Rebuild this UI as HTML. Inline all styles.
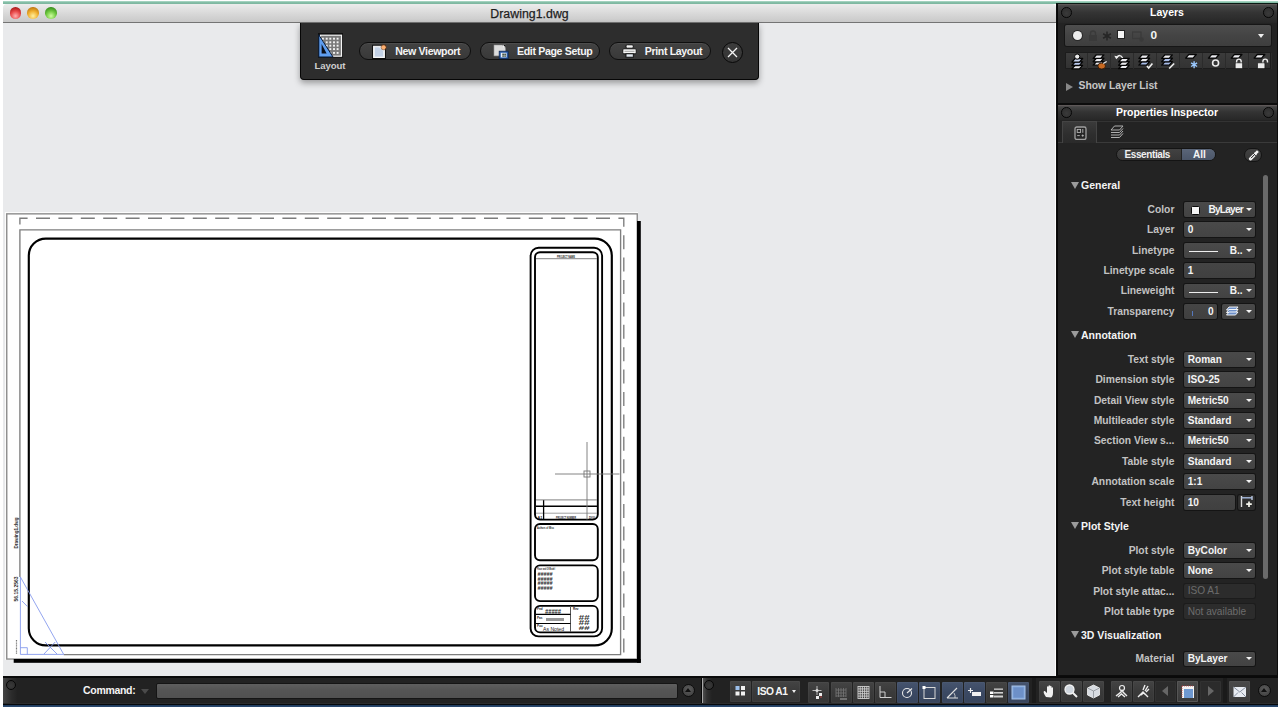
<!DOCTYPE html>
<html><head><meta charset="utf-8">
<style>
*{margin:0;padding:0;box-sizing:border-box}
html,body{width:1280px;height:707px;overflow:hidden;background:#fff;font-family:"Liberation Sans",sans-serif}
.a{position:absolute}
#teal{left:3px;top:1.3px;width:1275px;height:2.7px;background:linear-gradient(#b8e0d0,#86bfa8 40%,#7cb59e)}
#title{left:3px;top:4px;width:1053px;height:19px;background:linear-gradient(#ececec,#d6d6d6 60%,#c9c9c9);border-bottom:1px solid #747474;border-top-left-radius:4px;border-top-right-radius:4px}
#title .t{left:0;width:1053px;top:3px;text-align:center;font-size:12.3px;color:#1e1e1e;-webkit-text-stroke:0.25px #1e1e1e;letter-spacing:0.05px}
.tl{width:11.5px;height:11.5px;border-radius:50%;top:3.3px}
#canvas{left:3px;top:23px;width:1053px;height:653px;background:#e9eaec;border-right:1px solid #fbfbfb}
#panel{left:1056px;top:3px;width:222px;height:673px;background:#232323;border:1px solid #0c0c0c;border-top:1px solid #0b1a14}
#status{left:3px;top:676px;width:1275px;height:28px;background:#222;border-top:2px solid #0a0a0a}
#bband{left:3px;top:703px;width:1275px;height:4px;background:linear-gradient(#2c2c2c 0,#2c2c2c 1px,#05080b 1px,#05080b 2px,#1d3858 2px,#2d4d74 4px)}

#pop{left:299.5px;top:23px;width:459px;height:56.7px;background:#2d2d2d;border:1.5px solid #060606;border-top:none;border-radius:0 0 4px 4px;box-shadow:0 3px 6px rgba(0,0,0,.35)}
.pill{position:absolute;top:18.8px;height:18.6px;border-radius:9.5px;background:linear-gradient(#424242,#393939);border:1.3px solid #0e0e0e;box-shadow:inset 0 1px 0 rgba(255,255,255,.06)}
.pill span{position:absolute;top:2px;font-size:10.6px;font-weight:bold;color:#f4f4f4;white-space:nowrap;letter-spacing:-0.35px}
.lbl{font-weight:bold;white-space:nowrap}

.hdr{position:absolute;left:1px;width:220px;height:16px;background:linear-gradient(#5e5858 0,#5e5858 1px,#464646 1.6px,#343434 45%,#272727);}
.hdr .c{position:absolute;top:3px;width:10.5px;height:10.5px;border-radius:50%;background:radial-gradient(circle at 50% 60%,#3a3a3a,#2a2a2a);border:1.8px solid #070707}
.hdr .tt{position:absolute;left:0;width:220px;text-align:center;top:2px;font-size:10.5px;font-weight:bold;color:#fff}
.pl{position:absolute;right:102.6px;font-size:10.3px;font-weight:bold;color:#c2c2c2;white-space:nowrap;text-align:right}
.dd{position:absolute;left:126.5px;width:71px;height:14.8px;border-radius:2px;background:linear-gradient(#4a4a4a,#434343);box-shadow:0 0 0 1px #141414}
.dd span{position:absolute;left:4.2px;top:1.8px;font-size:10.1px;font-weight:bold;color:#f4f4f4;white-space:nowrap}
.ar{position:absolute;right:3px;top:5.8px;width:0;height:0;border-left:3px solid transparent;border-right:3px solid transparent;border-top:3.5px solid #f4f4f4}
.tx{background:linear-gradient(#454545,#404040)}
.dis{background:#2c2c2c;box-shadow:0 0 0 1px #1c1c1c}
.dis span{color:#6c6c6c;font-weight:normal}
.sec{position:absolute;left:24px;font-size:10.5px;font-weight:bold;color:#f4f4f4}
.tri{position:absolute;left:14px;width:0;height:0;border-left:4px solid transparent;border-right:4px solid transparent;border-top:7px solid #9a9a9a}

.sb{position:absolute;top:5px;width:21px;height:21px;background:linear-gradient(#444,#3a3a3a 50%,#363636);border-radius:1px;box-shadow:inset 0 0 0 1px rgba(255,255,255,.03)}
.sb.bl{background:linear-gradient(#46546e,#3b4963 50%,#37445c)}
.sb svg{position:absolute;left:0;top:0}
</style></head><body>
<div class="a" id="teal"></div>
<div class="a" id="title"><div class="a t">Drawing1.dwg</div>
<div class="a tl" style="left:6.8px;background:radial-gradient(circle at 50% 75%,#ffb0b0,#e84a4a 45%,#b01c1c 80%,#6a0c0c)"></div>
<div class="a tl" style="left:24.3px;background:radial-gradient(circle at 50% 75%,#fff0a0,#f0b030 45%,#c07a10 80%,#7a4a05)"></div>
<div class="a tl" style="left:42.2px;background:radial-gradient(circle at 50% 75%,#d0ffa0,#70c840 45%,#3a9020 80%,#1e5a0a)"></div>
</div>
<div class="a" id="canvas"></div>
<svg class="a" style="left:0;top:0" width="1280" height="707" viewBox="0 0 1280 707">
<rect x="5" y="212" width="633" height="448" fill="#fcfcfc"/><rect x="6.75" y="213.85" width="630.5" height="445.2" fill="#fff" stroke="#8c8c8c" stroke-width="1.4"/>
<rect x="637" y="221" width="3.8" height="441.8" fill="#000"/>
<rect x="13.7" y="659" width="627.1" height="3.8" fill="#000"/>
<path d="M19.9,224.5 L19.9,218.2 L623.8,218.2 L623.8,654.6" fill="none" stroke="#7c7c7c" stroke-width="1.35" stroke-dasharray="14 8.4"/>
<path d="M19.9,577 L19.9,229.9 L620.6,229.9 L620.6,654.6 L63.7,654.6" fill="none" stroke="#7e7e7e" stroke-width="1.35"/>
<rect x="28.8" y="238.6" width="583" height="406.8" rx="17" fill="none" stroke="#000" stroke-width="2.15"/>
<rect x="530.6" y="247.8" width="71.5" height="388.6" rx="8" fill="none" stroke="#000" stroke-width="1.9"/>
<rect x="535" y="252.3" width="62.8" height="267.3" rx="5" fill="none" stroke="#000" stroke-width="1.9"/>
<rect x="535" y="524" width="62.8" height="36.2" rx="5" fill="none" stroke="#000" stroke-width="1.9"/>
<rect x="535" y="565.4" width="62.8" height="35.7" rx="5" fill="none" stroke="#000" stroke-width="1.9"/>
<rect x="535" y="605.9" width="62.8" height="26.5" rx="5" fill="none" stroke="#000" stroke-width="1.9"/>
<line x1="536" y1="258.7" x2="597" y2="258.7" stroke="#9a9a9a" stroke-width="1.3"/>
<line x1="536" y1="499.9" x2="597" y2="499.9" stroke="#9a9a9a" stroke-width="1.4"/>
<line x1="536" y1="506.3" x2="597" y2="506.3" stroke="#000" stroke-width="1.4"/>
<line x1="536" y1="513.2" x2="597" y2="513.2" stroke="#a0a0a0" stroke-width="1"/>
<line x1="543.6" y1="500.2" x2="543.6" y2="519.6" stroke="#000" stroke-width="1.3"/>
<line x1="587" y1="442" x2="587" y2="519.6" stroke="#777" stroke-width="0.9"/>
<line x1="555" y1="474" x2="619.5" y2="474" stroke="#777" stroke-width="0.9"/>
<rect x="584" y="471" width="6" height="6" fill="none" stroke="#777" stroke-width="0.9"/>
<line x1="570.5" y1="606" x2="570.5" y2="632" stroke="#555" stroke-width="1"/>
<line x1="536" y1="614.4" x2="570.5" y2="614.4" stroke="#000" stroke-width="1.2"/>
<line x1="536" y1="623.5" x2="570.5" y2="623.5" stroke="#000" stroke-width="1.2"/>
<g fill="#222" font-family="Liberation Sans" font-weight="bold">
<text x="557" y="257.5" font-size="3.8" lengthAdjust="spacingAndGlyphs" textLength="18">PROJECT NAME</text>
<text x="537.5" y="518.5" font-size="3.8">A1</text>
<text x="556" y="518.5" font-size="3.8" lengthAdjust="spacingAndGlyphs" textLength="20">PROJECT NUMBER</text>
<text x="589" y="518.5" font-size="3.8" lengthAdjust="spacingAndGlyphs" textLength="6">DIGI</text>
<text x="537" y="529" font-size="3.4" lengthAdjust="spacingAndGlyphs" textLength="17">Authors of Misc</text>
<text x="537" y="570" font-size="3.4" lengthAdjust="spacingAndGlyphs" textLength="18">Place and Of Model</text>
<text x="537" y="610" font-size="3">Pnd</text>
<text x="537" y="618.5" font-size="3">Pas</text>
<text x="537" y="627" font-size="3">Puu</text>
<text x="573" y="610" font-size="3">Rev</text>
</g>
<g fill="#222" font-family="Liberation Sans" font-weight="bold" font-size="6.2" font-style="italic">
<text x="537.5" y="576" lengthAdjust="spacingAndGlyphs" textLength="15">#####</text><text x="537.5" y="580.5" lengthAdjust="spacingAndGlyphs" textLength="15">#####</text><text x="537.5" y="585" lengthAdjust="spacingAndGlyphs" textLength="15">#####</text><text x="537.5" y="589.5" lengthAdjust="spacingAndGlyphs" textLength="15">#####</text>
<text x="545" y="613.5" font-size="6.5" lengthAdjust="spacingAndGlyphs" textLength="16">#####</text>
</g><g fill="#3a3a3a" font-family="Liberation Sans" font-weight="bold" font-size="7" font-style="italic"><text x="578.5" y="620" lengthAdjust="spacingAndGlyphs" textLength="11">##</text><text x="578.5" y="625" lengthAdjust="spacingAndGlyphs" textLength="11">##</text><text x="578.5" y="629.5" font-size="5" lengthAdjust="spacingAndGlyphs" textLength="11">##</text></g>
<rect x="546" y="618" width="18" height="3" fill="#999"/>
<text x="543" y="631" font-size="5.5" fill="#222" font-family="Liberation Sans" lengthAdjust="spacingAndGlyphs" textLength="21">As Noted</text>
<g stroke="#7f95ec" stroke-width="0.85" fill="none">
<path d="M20.4,577 L20.4,654.4 L63.7,654.4 Z"/>
<path d="M20.4,647.7 L27.3,647.7 L27.3,654.4"/>
<path d="M44,654 L55.2,642 M45,642 L57,654 M22,601 L27.6,606.7"/>
</g>
<g font-family="Liberation Sans" font-size="4.8" font-weight="bold" fill="#2a2a2a">
<text transform="translate(18.4,548.5) rotate(-90)" lengthAdjust="spacingAndGlyphs" textLength="31">Drawing1.dwg</text>
<text transform="translate(18.4,601.5) rotate(-90)" lengthAdjust="spacingAndGlyphs" textLength="25">56.15.2563</text>
</g><path d="M16.5,640 V654" stroke="#777" stroke-width="1.2" stroke-dasharray="1 .6"/>
</svg>
<div class="a" id="pop">
<svg class="a" style="left:17px;top:10px" width="26" height="26" viewBox="0 0 26 26">
<rect x="0" y="0" width="25" height="24.6" fill="#101010"/>
<rect x="2.5" y="2.2" width="21" height="21" fill="#7a7a7a" stroke="#f4f4f4" stroke-width="1.2"/>
<rect x="3.95" y="4.75" width="1.9" height="1.9" fill="#f4f4f4"/><rect x="7.749999999999999" y="4.75" width="1.9" height="1.9" fill="#f4f4f4"/><rect x="11.350000000000001" y="4.75" width="1.9" height="1.9" fill="#f4f4f4"/><rect x="15.05" y="4.75" width="1.9" height="1.9" fill="#f4f4f4"/><rect x="18.650000000000002" y="4.75" width="1.9" height="1.9" fill="#f4f4f4"/><rect x="3.95" y="8.350000000000001" width="1.9" height="1.9" fill="#f4f4f4"/><rect x="7.749999999999999" y="8.350000000000001" width="1.9" height="1.9" fill="#f4f4f4"/><rect x="11.350000000000001" y="8.350000000000001" width="1.9" height="1.9" fill="#f4f4f4"/><rect x="15.05" y="8.350000000000001" width="1.9" height="1.9" fill="#f4f4f4"/><rect x="18.650000000000002" y="8.350000000000001" width="1.9" height="1.9" fill="#f4f4f4"/><rect x="3.95" y="11.75" width="1.9" height="1.9" fill="#f4f4f4"/><rect x="7.749999999999999" y="11.75" width="1.9" height="1.9" fill="#f4f4f4"/><rect x="11.350000000000001" y="11.75" width="1.9" height="1.9" fill="#f4f4f4"/><rect x="15.05" y="11.75" width="1.9" height="1.9" fill="#f4f4f4"/><rect x="18.650000000000002" y="11.75" width="1.9" height="1.9" fill="#f4f4f4"/><rect x="3.95" y="15.150000000000002" width="1.9" height="1.9" fill="#f4f4f4"/><rect x="7.749999999999999" y="15.150000000000002" width="1.9" height="1.9" fill="#f4f4f4"/><rect x="11.350000000000001" y="15.150000000000002" width="1.9" height="1.9" fill="#f4f4f4"/><rect x="15.05" y="15.150000000000002" width="1.9" height="1.9" fill="#f4f4f4"/><rect x="18.650000000000002" y="15.150000000000002" width="1.9" height="1.9" fill="#f4f4f4"/><rect x="3.95" y="18.95" width="1.9" height="1.9" fill="#f4f4f4"/><rect x="7.749999999999999" y="18.95" width="1.9" height="1.9" fill="#f4f4f4"/><rect x="11.350000000000001" y="18.95" width="1.9" height="1.9" fill="#f4f4f4"/><rect x="15.05" y="18.95" width="1.9" height="1.9" fill="#f4f4f4"/><rect x="18.650000000000002" y="18.95" width="1.9" height="1.9" fill="#f4f4f4"/>
<path d="M0.8,1.8 L0.8,24 L15,24 Z" fill="#5f9ef0" stroke="#0a1a33" stroke-width="1"/>
<path d="M3.6,11 L3.6,20.6 L8.6,20.6 Z" fill="#0b0f18"/>
</svg>
<div class="a lbl" style="left:14px;top:36.8px;font-size:9.6px;color:#cfcfcf;letter-spacing:-0.1px">Layout</div>
<div class="pill" style="left:58.7px;width:112px"><span style="left:35px">New Viewport</span></div>
<div class="pill" style="left:179.5px;width:119.5px"><span style="left:36px">Edit Page Setup</span></div>
<div class="pill" style="left:308.5px;width:101.5px"><span style="left:34.7px">Print Layout</span></div>
<svg class="a" style="left:71px;top:21px" width="16" height="16" viewBox="0 0 16 16">
<rect x="0.6" y="1.3" width="12.8" height="13.2" fill="none" stroke="#0c0c0c" stroke-width="1"/>
<rect x="1.6" y="2.3" width="10.8" height="11.2" fill="#e6ebf2" stroke="#f6f6f6" stroke-width="1"/>
<path d="M3,3.5 V12.5 H11 V7 L7,3.5 Z" fill="#c4d2e6"/>
<circle cx="11.7" cy="3.3" r="3" fill="#7a3a10" opacity=".6"/>
<circle cx="11.7" cy="3.3" r="2.1" fill="#ffb070"/>
</svg>
<svg class="a" style="left:192px;top:21px" width="17" height="16" viewBox="0 0 17 16">
<rect x="1" y="1" width="11.4" height="10.9" fill="#dcdcdc" stroke="#9a9a9a" stroke-width=".6"/>
<path d="M9.5,1 L12.6,1 L12.6,4.2 Z" fill="#0a0a0a"/><path d="M10,0.8 L12.8,3.6 L10,3.6 Z" fill="#f0f0f0"/>
<rect x="6.2" y="7.2" width="9" height="7.6" fill="#2f62b0" stroke="#0b2550" stroke-width=".8"/>
<rect x="7.8" y="8.8" width="5.8" height="4.6" fill="#e9eff8"/>
<rect x="9.3" y="9.6" width="1.6" height="1.3" fill="#2a3a2a"/><rect x="9.3" y="11.4" width="1.6" height="1.3" fill="#2a3a2a"/><rect x="11.3" y="9.6" width="1.6" height="1.3" fill="#2a3a2a"/><rect x="11.3" y="11.4" width="1.6" height="1.3" fill="#2a3a2a"/>
</svg>
<svg class="a" style="left:321px;top:21px" width="16" height="15" viewBox="0 0 16 15">
<rect x="4" y="0.8" width="7.3" height="3.4" rx="1.2" fill="#f2f2f2" stroke="#0a0a0a" stroke-width=".9"/>
<rect x="0.8" y="4.8" width="13.4" height="5" rx="1" fill="#f6f6f6" stroke="#0a0a0a" stroke-width=".9"/>
<path d="M2.5,7.3 H12.5" stroke="#8a8a8a" stroke-width=".8"/>
<rect x="4" y="9.8" width="7.3" height="3.4" fill="#e2e8f0" stroke="#0a0a0a" stroke-width=".9"/>
</svg>
<div class="a" style="left:421.5px;top:19px;width:21px;height:21px;border-radius:50%;background:linear-gradient(#3c3c3c,#343434);border:1.5px solid #080808">
<svg class="a" style="left:3.5px;top:3.5px" width="11" height="11" viewBox="0 0 11 11"><path d="M1,1 L10,10 M10,1 L1,10" stroke="#f4f4f4" stroke-width="1.3"/></svg></div>
</div>
<div class="a" id="panel"><div class="hdr" style="left:0;top:0;width:220px;height:19px"><div class="c" style="left:4px;top:3px"></div><div class="c" style="left:206px;top:3px"></div><div class="tt" style="top:1.8px">Layers</div></div>
<div class="a" style="left:7.5px;top:21px;width:206px;height:21px;border-radius:2px;background:linear-gradient(#4e4e4e,#444 50%,#3e3e3e);box-shadow:0 0 0 1px #161616">
<div class="a" style="left:8px;top:6px;width:9px;height:9px;border-radius:50%;background:#ececec;box-shadow:0 0 0 1px #2a2a2a"></div>
<svg class="a" style="left:23px;top:5px" width="10" height="11" viewBox="0 0 10 11"><rect x="1" y="5" width="8" height="6" fill="#3a3a3a"/><path d="M2.5,5 V3.5 A2.5,2.5 0 0 1 7.5,3.5 V5" fill="none" stroke="#3a3a3a" stroke-width="1.3"/></svg>
<svg class="a" style="left:37px;top:5.5px" width="10" height="10" viewBox="0 0 10 10"><path d="M5,0.5 V9.5 M1.1,2.75 L8.9,7.25 M8.9,2.75 L1.1,7.25" stroke="#262626" stroke-width="1.5"/></svg>
<div class="a" style="left:52px;top:5px;width:8.5px;height:8.5px;background:#f4f4f4;border:1px solid #222"></div>
<svg class="a" style="left:67px;top:5.5px" width="13" height="12" viewBox="0 0 13 12"><rect x="0.5" y="1" width="8.5" height="6.5" fill="none" stroke="#3a3a3a" stroke-width="1.2"/><circle cx="9.5" cy="8.5" r="2.3" fill="#3a3a3a"/></svg>
<div class="a" style="left:86px;top:3.3px;font-size:11.8px;color:#f4f4f4;font-weight:bold">0</div>
<div class="a" style="left:193px;top:8.5px;border-left:3px solid transparent;border-right:3px solid transparent;border-top:4px solid #eee"></div>
</div>
<div class="a" style="left:7.5px;top:48.3px;width:206px;height:16.5px;background:linear-gradient(#3b3b3b,#333);border:1px solid #1c1c1c;border-radius:1px"><div class="a" style="left:0.0px;top:0;width:22.9px;height:16px;border-right:1px solid #2b2b2b"></div><div class="a" style="left:22.9px;top:0;width:22.9px;height:16px;border-right:1px solid #2b2b2b"></div><div class="a" style="left:45.8px;top:0;width:22.9px;height:16px;border-right:1px solid #2b2b2b"></div><div class="a" style="left:68.7px;top:0;width:22.9px;height:16px;border-right:1px solid #2b2b2b"></div><div class="a" style="left:91.6px;top:0;width:22.9px;height:16px;border-right:1px solid #2b2b2b"></div><div class="a" style="left:114.5px;top:0;width:22.9px;height:16px;border-right:1px solid #2b2b2b"></div><div class="a" style="left:137.4px;top:0;width:22.9px;height:16px;border-right:1px solid #2b2b2b"></div><div class="a" style="left:160.3px;top:0;width:22.9px;height:16px;border-right:1px solid #2b2b2b"></div><div class="a" style="left:183.2px;top:0;width:22.9px;height:16px;border-right:1px solid #2b2b2b"></div><svg class="a" style="left:0;top:0" width="206" height="17" viewBox="0 0 206 17"><path d="M9.1,12.3 H16.6 L13.4,15.9 H5.9 Z" fill="#ececf0" stroke="#050505" stroke-width="1.3" stroke-linejoin="round"/><path d="M9.1,8.9 H16.6 L13.4,12.5 H5.9 Z" fill="#b8c8ee" stroke="#050505" stroke-width="1.3" stroke-linejoin="round"/><path d="M9.1,5.5 H16.6 L13.4,9.1 H5.9 Z" fill="#c8d4f0" stroke="#050505" stroke-width="1.3" stroke-linejoin="round"/><circle cx="11.2" cy="3.6" r="2.6" fill="#ececec" stroke="#050505" stroke-width="1"/><path d="M30.4,8.6 H37.9 L34.7,12.2 H27.2 Z" fill="#ececf0" stroke="#050505" stroke-width="1.3" stroke-linejoin="round"/><path d="M30.4,5.2 H37.9 L34.7,8.8 H27.2 Z" fill="#ececf0" stroke="#050505" stroke-width="1.3" stroke-linejoin="round"/><path d="M30.4,1.8 H37.9 L34.7,5.4 H27.2 Z" fill="#ececf0" stroke="#050505" stroke-width="1.3" stroke-linejoin="round"/><ellipse cx="35.7" cy="13" rx="3.8" ry="3" fill="#c86a22" stroke="#2a1405" stroke-width=".8"/><path d="M37.2,10.5 L40.7,8.5" stroke="#e8e8e8" stroke-width="1.2"/><path d="M55.8,12.1 H63.3 L60.1,15.7 H52.6 Z" fill="#ececf0" stroke="#050505" stroke-width="1.3" stroke-linejoin="round"/><path d="M55.8,8.7 H63.3 L60.1,12.3 H52.6 Z" fill="#ececf0" stroke="#050505" stroke-width="1.3" stroke-linejoin="round"/><path d="M55.8,5.3 H63.3 L60.1,8.9 H52.6 Z" fill="#ececf0" stroke="#050505" stroke-width="1.3" stroke-linejoin="round"/><path d="M50.6,4.5 Q54.1,0.5 56.6,5" fill="none" stroke="#ececec" stroke-width="1.5"/><path d="M48.3,2.8 L50.3,6.3 L52.8,3.6 Z" fill="#ececec"/><path d="M76.1,8.6 H83.6 L80.4,12.2 H72.9 Z" fill="#a8bce8" stroke="#050505" stroke-width="1.3" stroke-linejoin="round"/><path d="M76.1,5.2 H83.6 L80.4,8.8 H72.9 Z" fill="#ececf0" stroke="#050505" stroke-width="1.3" stroke-linejoin="round"/><path d="M76.1,1.8 H83.6 L80.4,5.4 H72.9 Z" fill="#ececf0" stroke="#050505" stroke-width="1.3" stroke-linejoin="round"/><path d="M80.9,13 L82.7,15 L86.4,10.5" fill="none" stroke="#f0f0f0" stroke-width="1.6"/><path d="M98.9,8.6 H106.4 L103.2,12.2 H95.7 Z" fill="#a8bce8" stroke="#050505" stroke-width="1.3" stroke-linejoin="round"/><path d="M98.9,5.2 H106.4 L103.2,8.8 H95.7 Z" fill="#a8bce8" stroke="#050505" stroke-width="1.3" stroke-linejoin="round"/><path d="M98.9,1.8 H106.4 L103.2,5.4 H95.7 Z" fill="#ececf0" stroke="#050505" stroke-width="1.3" stroke-linejoin="round"/><path d="M103.2,15.5 L108.2,10.5" stroke="#f0f0f0" stroke-width="1.6"/><path d="M122.8,1.5 H130.3 L127.1,5.1 H119.6 Z" fill="#ececf0" stroke="#050505" stroke-width="1.3" stroke-linejoin="round"/><g stroke="#9ccaff" stroke-width="1.4"><path d="M128.1,8.2 V15.2 M125.1,9.9 L131.1,13.5 M125.1,13.5 L131.1,9.9"/></g><path d="M145.6,1.5 H153.1 L149.9,5.1 H142.4 Z" fill="#ececf0" stroke="#050505" stroke-width="1.3" stroke-linejoin="round"/><circle cx="149.6" cy="10" r="3" fill="none" stroke="#ececec" stroke-width="1.6"/><path d="M168.4,1.5 H175.9 L172.7,5.1 H165.2 Z" fill="#ececf0" stroke="#050505" stroke-width="1.3" stroke-linejoin="round"/><path d="M170.6,10 V8.4 A2.3,2.3 0 0 1 175.2,8.4 V10" fill="none" stroke="#ececec" stroke-width="1.4"/><rect x="169.2" y="9.8" width="7.4" height="5.8" rx="1" fill="#ececec" stroke="#050505" stroke-width=".6"/><path d="M191.3,1.5 H198.8 L195.6,5.1 H188.1 Z" fill="#ececf0" stroke="#050505" stroke-width="1.3" stroke-linejoin="round"/><path d="M196.9,10 V8.4 A2.3,2.3 0 0 1 201.5,8.4 V9.5" fill="none" stroke="#ececec" stroke-width="1.4"/><rect x="191.5" y="9.8" width="7.4" height="5.8" rx="1" fill="#ececec" stroke="#050505" stroke-width=".6"/></svg></div>
<div class="a" style="left:9px;top:78.5px;width:0;height:0;border-top:4px solid transparent;border-bottom:4px solid transparent;border-left:7px solid #888"></div>
<div class="a lbl" style="left:21.59999999999991px;top:75.5px;font-size:10.4px;color:#c6c6c6;letter-spacing:-0.05px">Show Layer List</div>
<div class="a" style="left:0;top:98.5px;width:220px;height:2px;background:#0c0c0c"></div>
<div class="hdr" style="left:0;top:100.5px;width:220px;height:15px"><div class="c" style="left:4px;top:2.5px"></div><div class="c" style="left:206px;top:2.5px"></div><div class="tt" style="top:1.5px">Properties Inspector</div></div>
<div class="a" style="left:0;top:138px;width:220px;height:1px;background:#3a3a3a"></div>
<div class="a" style="left:40px;top:116.5px;width:180px;height:1px;background:#333"></div>
<div class="a" style="left:5.400000000000091px;top:116.5px;width:35px;height:22px;background:linear-gradient(#3a3a3a,#2e2e2e 60%,#2a2a2a);border:1px solid #444;border-bottom:none"></div>
<svg class="a" style="left:16.5px;top:121.5px" width="13" height="14" viewBox="0 0 13 14"><rect x="1" y="1" width="11" height="12.5" rx="1.8" fill="#262626" stroke="#a0a0a0" stroke-width="1.3"/><rect x="3.2" y="3.4" width="3.4" height="3" fill="none" stroke="#b8b8b8" stroke-width=".9"/><path d="M8.8,3 V6.8 M3.2,9.6 H5.8 M7.6,9.6 H9.8 M8.7,8.5 V10.7" stroke="#b8b8b8" stroke-width=".9"/></svg>
<svg class="a" style="left:52.5px;top:120.5px" width="14" height="13" viewBox="0 0 14 13"><g fill="none" stroke="#b0b0b0" stroke-width="1"><path d="M4.5,1 H13 L9.5,5 H1 Z"/><path d="M1,7.5 H9.5 L13,3.5"/><path d="M1,10 H9.5 L13,6"/><path d="M1,12.5 H9.5 L13,8.5"/></g></svg>
<div class="a" style="left:59px;top:143.7px;width:100px;height:13.8px;border-radius:7px;background:linear-gradient(#424242,#373737);border:1px solid #141414;overflow:hidden">
<div class="a" style="left:64px;top:0;width:36px;height:12px;background:linear-gradient(#5a6578,#4a5568);border-left:1px solid #222"></div>
<div class="a lbl" style="left:7.5px;top:0.8px;font-size:10px;color:#f0f0f0;letter-spacing:-0.4px">Essentials</div>
<div class="a lbl" style="left:76px;top:0.8px;font-size:10px;color:#f4f4f4">All</div></div>
<div class="a" style="left:187px;top:143.5px;width:18px;height:14px;border-radius:7px;background:linear-gradient(#424242,#363636);border:1px solid #141414">
<svg class="a" style="left:3px;top:0px" width="12" height="12" viewBox="0 0 12 12"><path d="M2.5,9.8 L7,5.3" stroke="#f4f4f4" stroke-width="3.2" stroke-linecap="round"/><path d="M3,9.2 L6.5,5.7" stroke="#111" stroke-width="1"/><path d="M6,4.3 L9,1.3 L10.8,3.1 L7.8,6.1 Z" fill="#f4f4f4"/><path d="M5.2,4.2 L7.9,6.9" stroke="#111" stroke-width=".8"/></svg></div>
<div class="a" style="left:205.70000000000005px;top:170.5px;width:5.3px;height:404.0px;border-radius:3px;background:#6a6a6a"></div>
<div class="tri" style="top:177.6px"></div><div class="sec" style="top:175.2px">General</div>
<div class="pl" style="top:199.8px">Color</div><div class="dd" style="top:198.0px"><span><i style="position:absolute;left:3.5px;top:2.7px;width:8.5px;height:8.5px;background:#f4f4f4;border:1.2px solid #0a0a0a;border-radius:1.5px"></i><b style="position:absolute;left:20.7px;font-weight:bold;letter-spacing:-0.75px">ByLayer</b></span><div class="ar"></div></div>
<div class="pl" style="top:220.2px">Layer</div><div class="dd" style="top:218.4px"><span>0</span><div class="ar"></div></div>
<div class="pl" style="top:240.6px">Linetype</div><div class="dd" style="top:238.8px"><span><i style="position:absolute;left:1px;top:6.5px;width:29px;height:1px;background:#eee"></i><b style="position:absolute;left:42px">B..</b></span><div class="ar"></div></div>
<div class="pl" style="top:261.0px">Linetype scale</div><div class="dd tx" style="top:259.2px"><span>1</span></div>
<div class="pl" style="top:281.4px">Lineweight</div><div class="dd" style="top:279.6px"><span><i style="position:absolute;left:1px;top:6.5px;width:29px;height:1px;background:#eee"></i><b style="position:absolute;left:42px">B..</b></span><div class="ar"></div></div>
<div class="pl" style="top:302.2px">Transparency</div>
<div class="dd tx" style="top:300.4px;width:33px;border-color:#1a2238"><span style="left:auto;right:3px">0</span><i style="position:absolute;left:8px;top:7px;width:1px;height:5px;background:#5577bb"></i></div>
<div class="dd" style="top:300.4px;left:164.5px;width:33px"><svg class="a" style="left:4px;top:1.5px" width="13" height="11" viewBox="0 0 13 11"><g stroke="#fff" stroke-width=".9" fill="#6d8fc8"><path d="M3,1 H12 L9.5,4 H0.5 Z"/><path d="M3,3.5 H12 L9.5,6.5 H0.5 Z"/><path d="M3,6 H12 L9.5,9 H0.5 Z"/></g></svg><div class="ar"></div></div>
<div class="tri" style="top:327.3px"></div><div class="sec" style="top:324.9px">Annotation</div>
<div class="pl" style="top:349.8px">Text style</div><div class="dd" style="top:348.0px"><span>Roman</span><div class="ar"></div></div>
<div class="pl" style="top:370.2px">Dimension style</div><div class="dd" style="top:368.4px"><span>ISO-25</span><div class="ar"></div></div>
<div class="pl" style="top:390.6px">Detail View style</div><div class="dd" style="top:388.8px"><span>Metric50</span><div class="ar"></div></div>
<div class="pl" style="top:411.0px">Multileader style</div><div class="dd" style="top:409.2px"><span>Standard</span><div class="ar"></div></div>
<div class="pl" style="top:431.4px">Section View s...</div><div class="dd" style="top:429.6px"><span>Metric50</span><div class="ar"></div></div>
<div class="pl" style="top:451.8px">Table style</div><div class="dd" style="top:450.0px"><span>Standard</span><div class="ar"></div></div>
<div class="pl" style="top:472.2px">Annotation scale</div><div class="dd" style="top:470.4px"><span>1:1</span><div class="ar"></div></div>
<div class="pl" style="top:492.6px">Text height</div>
<div class="dd tx" style="top:490.8px;width:51px"><span>10</span></div>
<div class="dd" style="top:490.8px;left:181px;width:16.5px;background:#2e2e2e"><svg class="a" style="left:1px;top:0.5px" width="15" height="14" viewBox="0 0 15 14"><path d="M2.5,1 V12" stroke="#e0e0e0" stroke-width="1.4"/><path d="M13,1 V5" stroke="#c8d4ec" stroke-width="1.3"/><path d="M2.5,2.8 H13" stroke="#a8bce0" stroke-width="1.4"/><path d="M10,6.5 V12 M7.2,9.2 H12.8" stroke="#f8f8f0" stroke-width="1.7"/></svg></div>
<div class="tri" style="top:518.3px"></div><div class="sec" style="top:515.9px">Plot Style</div>
<div class="pl" style="top:540.7px">Plot style</div><div class="dd" style="top:538.9px"><span>ByColor</span><div class="ar"></div></div>
<div class="pl" style="top:561.1px">Plot style table</div><div class="dd" style="top:559.3px"><span>None</span><div class="ar"></div></div>
<div class="pl" style="top:581.5px">Plot style attac...</div><div class="dd dis" style="top:579.7px"><span>ISO A1</span></div>
<div class="pl" style="top:601.9px">Plot table type</div><div class="dd dis" style="top:600.1px"><span>Not available</span></div>
<div class="tri" style="top:627.0px"></div><div class="sec" style="top:624.6px">3D Visualization</div>
<div class="pl" style="top:649.4px">Material</div><div class="dd" style="top:647.6px"><span>ByLayer</span><div class="ar"></div></div><div class="a" style="left:0;top:0;width:1px;height:671px;background:#070707"></div></div>
<div class="a" id="status"><div class="a" style="left:0;top:0;width:14px;height:26px;background:linear-gradient(90deg,#454545,#2c2c2c 60%,#232323)"></div>
<div class="a" style="left:2.5px;top:2px;width:10px;height:10px;border-radius:50%;background:radial-gradient(circle at 50% 60%,#3a3a3a,#2a2a2a);border:1.8px solid #070707"></div>
<div class="a lbl" style="left:80px;top:6px;font-size:10.5px;color:#f4f4f4;letter-spacing:-0.3px">Command:</div>
<div class="a" style="left:137.5px;top:11px;border-left:4px solid transparent;border-right:4px solid transparent;border-top:5px solid #4a4a4a"></div>
<div class="a" style="left:152.7px;top:5px;width:522.1px;height:15.5px;background:linear-gradient(#5e5e5e,#555 40%,#515151);border:1px solid #151515;border-radius:2px"></div>
<div class="a" style="left:678.8px;top:5.8px;width:13px;height:13px;border-radius:50%;background:radial-gradient(circle at 50% 40%,#5e5e5e,#444 70%,#3a3a3a);border:1.3px solid #0c0c0c"><div class="a" style="left:2.5px;top:3px;border-left:3.5px solid transparent;border-right:3.5px solid transparent;border-bottom:4px solid #111"></div></div>
<div class="a" style="left:697.5px;top:0;width:1.7px;height:26px;background:#050505"></div>
<div class="a" style="left:699.2px;top:0;width:10px;height:26px;background:linear-gradient(90deg,#a8a8a8 0,#a8a8a8 1px,#4a4a4a 1.5px,#303030 5px,rgba(35,35,35,0) 10px)"></div>
<div class="a" style="left:701.2px;top:2.3px;width:10px;height:10px;border-radius:50%;background:radial-gradient(circle at 50% 60%,#3a3a3a,#2a2a2a);border:1.8px solid #070707"></div>
<div class="sb" style="left:727px;top:3.4px"><svg width="21" height="21" viewBox="0 0 21 21"><rect x="5.5" y="5" width="4" height="4" fill="#9cc0ec"/><rect x="11" y="5" width="4" height="4" fill="#f0f0f0"/><rect x="5.5" y="10.5" width="4" height="4" fill="#f0f0f0"/><rect x="11" y="10.5" width="4" height="4" fill="#f0f0f0"/></svg></div>
<div class="sb" style="left:749.3px;top:3.4px;width:48.2px"><div class="a" style="left:5px;top:4.8px;font-size:10.2px;font-weight:bold;color:#f4f4f4;letter-spacing:-0.5px">ISO A1</div><div class="a" style="left:40px;top:9px;border-left:2.5px solid transparent;border-right:2.5px solid transparent;border-top:3.5px solid #eee"></div></div>
<div class="sb" style="left:805.4px;top:3.5px"><svg width="21" height="21" viewBox="0 0 21 21"><path d="M9,4 V13 M4.5,8.5 H13.5" stroke="#bbb" stroke-width="1"/><circle cx="9" cy="8.5" r="1.5" fill="#ddd"/><rect x="11" y="11" width="3" height="3" fill="#eee"/><rect x="8" y="14" width="3" height="3" fill="#eee"/><circle cx="13" cy="15" r=".8" fill="#c44"/></svg></div>
<div class="sb" style="left:827.6px;top:3.5px"><svg width="21" height="21" viewBox="0 0 21 21"><g stroke="#777" stroke-width=".8" fill="none"><path d="M5,6 V15 M7.5,6 V15 M10,6 V15 M12.5,6 V15 M15,6 V15 M5,8 H15 M5,11 H15 M5,14 H15"/></g><path d="M9,17 H16" stroke="#aaa" stroke-width="1"/></svg></div>
<div class="sb" style="left:849.8px;top:3.5px"><svg width="21" height="21" viewBox="0 0 21 21"><g stroke="#d0d0d0" stroke-width=".9" fill="none"><rect x="5" y="4.5" width="11" height="12"/><path d="M7.2,4.5 V16.5 M9.4,4.5 V16.5 M11.6,4.5 V16.5 M13.8,4.5 V16.5 M5,6.9 H16 M5,9.3 H16 M5,11.7 H16 M5,14.1 H16"/></g></svg></div>
<div class="sb" style="left:872.0px;top:3.5px"><svg width="21" height="21" viewBox="0 0 21 21"><path d="M5,4 V15.5 H16.5 M5,10 H10 V15.5" stroke="#d0d0d0" stroke-width="1" fill="none"/></svg></div>
<div class="sb bl" style="left:894.2px;top:3.5px"><svg width="21" height="21" viewBox="0 0 21 21"><circle cx="10" cy="11" r="4.5" stroke="#e8e8e8" stroke-width="1.1" fill="none"/><path d="M10,11 L15,6.5" stroke="#e8e8e8" stroke-width="1.1"/></svg></div>
<div class="sb bl" style="left:916.4px;top:3.5px"><svg width="21" height="21" viewBox="0 0 21 21"><rect x="5" y="5.5" width="11" height="11" stroke="#d8d8d8" stroke-width="1" fill="none"/><rect x="3.5" y="4" width="3" height="3" fill="#fff"/></svg></div>
<div class="sb bl" style="left:938.6px;top:3.5px"><svg width="21" height="21" viewBox="0 0 21 21"><path d="M5,16 H16 M5,16 L15,6" stroke="#e0e0e0" stroke-width="1.1" fill="none"/><path d="M12,11 A7,7 0 0 1 13,16" stroke="#e0e0e0" stroke-width=".8" fill="none"/></svg></div>
<div class="sb bl" style="left:960.8px;top:3.5px"><svg width="21" height="21" viewBox="0 0 21 21"><path d="M4,8.5 H9 M6.5,6 V11" stroke="#f0f0f0" stroke-width="1.2"/><rect x="8" y="10" width="9" height="4" fill="#f0f0f0"/></svg></div>
<div class="sb" style="left:983.0px;top:3.5px"><svg width="21" height="21" viewBox="0 0 21 21"><rect x="8" y="6.5" width="9" height="1.3" fill="#d0d0d0"/><rect x="8" y="10" width="9" height="1.6" fill="#d0d0d0"/><rect x="8" y="13.5" width="9" height="2" fill="#d0d0d0"/><rect x="4" y="9.5" width="3.5" height="2.5" fill="#fff"/><rect x="4" y="13" width="3.5" height="2.5" fill="#fff"/></svg></div>
<div class="sb bl" style="left:1005.0px;top:3.5px"><svg width="21" height="21" viewBox="0 0 21 21"><rect x="4" y="4" width="13" height="13" fill="#7da2d8" stroke="#a9c3e8" stroke-width="1"/><rect x="5.5" y="5.5" width="10" height="10" fill="#6d90c8"/></svg></div>
<div class="a" style="left:1029px;top:0;width:4px;height:26px;background:#1a1a1a"></div>
<div class="sb" style="left:1036px;top:3px"><svg width="21" height="21" viewBox="0 0 21 21"><path d="M7,16 C5,13 4,11 5,10 C6,9.5 7,11 8,12 V6 C8,5 9.5,5 9.5,6 V10 V5 C9.5,4 11,4 11,5 V10 V5.5 C11,4.5 12.5,4.5 12.5,5.5 V10.5 V7 C12.5,6 14,6 14,7 V12 C14,14.5 13,16 12,16.5 Z" fill="#f0f0f0"/></svg></div>
<div class="sb" style="left:1058.2px;top:3px"><svg width="21" height="21" viewBox="0 0 21 21"><circle cx="8.5" cy="8.5" r="4.5" fill="#cfd6de" stroke="#f4f4f4" stroke-width="1.3"/><path d="M11.5,11.5 L16,16" stroke="#f0f0f0" stroke-width="2"/></svg></div>
<div class="sb" style="left:1080.4px;top:3px"><svg width="21" height="21" viewBox="0 0 21 21"><path d="M10.5,4 L16.5,7 V14 L10.5,17 L4.5,14 V7 Z" fill="#d8dce2" stroke="#f4f4f4" stroke-width=".8"/><path d="M4.5,7 L10.5,10 L16.5,7 M10.5,10 V17" stroke="#8a8f96" stroke-width=".8" fill="none"/></svg></div>
<div class="sb" style="left:1108px;top:3px"><svg width="21" height="21" viewBox="0 0 21 21"><circle cx="11" cy="7" r="2.5" fill="none" stroke="#eee" stroke-width="1.2"/><path d="M5,15 L10,11 L10.5,9.5 L11.5,9.5 L12,11 L16,15 M7,16 L10.5,13 L14,16" stroke="#eee" stroke-width="1.4" fill="none"/></svg></div>
<div class="sb" style="left:1130.2px;top:3px"><svg width="21" height="21" viewBox="0 0 21 21"><path d="M5,16 L10,11 L15,16 M8,14 L10.5,12 L13,14 M12,10 L15,5 M10,9 L12,4 M13,11 L16,8" stroke="#eee" stroke-width="1.4" fill="none"/></svg></div>
<div class="sb" style="left:1152px;top:3px;background:#2b2b2b"><div class="a" style="left:7px;top:5px;border-top:5.5px solid transparent;border-bottom:5.5px solid transparent;border-right:6px solid #666"></div></div>
<div class="sb" style="left:1174px;top:3px;background:linear-gradient(#4a4a4a,#3a3a3a);box-shadow:inset 0 0 0 1px #555"><svg width="21" height="21" viewBox="0 0 21 21"><rect x="5" y="5" width="12" height="12" fill="#f2f2f2"/><rect x="7" y="8" width="9" height="9" fill="#6f98d0"/><path d="M5,5 H17 M5,5 V17" stroke="#c33" stroke-width=".7" stroke-dasharray="1 1"/></svg></div>
<div class="sb" style="left:1196.5px;top:3px;background:#2b2b2b"><div class="a" style="left:8px;top:5px;border-top:5.5px solid transparent;border-bottom:5.5px solid transparent;border-left:6px solid #666"></div></div>
<div class="a" style="left:1220px;top:0;width:4px;height:26px;background:#1a1a1a"></div>
<div class="sb" style="left:1225.5px;top:3px;background:linear-gradient(#4a4a4a,#3c3c3c)"><svg width="21" height="21" viewBox="0 0 21 21"><rect x="4.5" y="6" width="12.5" height="10" fill="#e8ecf2"/><path d="M4.5,6 L10.75,11 L17,6 M4.5,16 L9,11.5 M17,16 L12.5,11.5" stroke="#7a8596" stroke-width=".9" fill="none"/></svg></div>
<div class="a" style="left:1254.5px;top:5.5px;width:13px;height:13px;border-radius:50%;background:radial-gradient(circle at 50% 40%,#5e5e5e,#444 70%,#3a3a3a);border:1.3px solid #0c0c0c"><div class="a" style="left:2.5px;top:3px;border-left:3.5px solid transparent;border-right:3.5px solid transparent;border-bottom:4px solid #111"></div></div></div>
<div class="a" id="bband"></div>
</body></html>
